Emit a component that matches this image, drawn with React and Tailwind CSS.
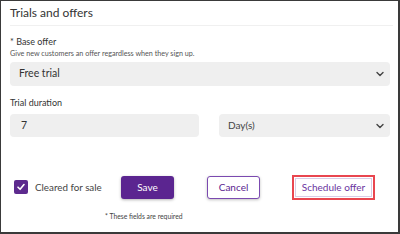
import React from "react";

function Chevron() {
  return (
    <svg width="8" height="6" viewBox="0 0 8 6" fill="none">
      <path d="M1 1.5 L4 4.5 L7 1.5" stroke="#444" strokeWidth="1.4" strokeLinecap="round" strokeLinejoin="round" />
    </svg>
  );
}

export default function App() {
  return (
    <div
      className="w-[400px] h-[234px] bg-white border-t border-l border-r-2 border-b-2 border-[#3a3a3a] overflow-hidden text-[#333]"
      style={{ fontFamily: "Lato, 'Open Sans', sans-serif" }}
    >
      <div className="pl-[9px] pr-[5px]">
        <div className="h-[25px] flex items-center text-[12px] text-[#333] border-b border-[#f0f0f0]">
          Trials and offers
        </div>
        <div className="pt-[10px] text-[9px] leading-[12px] text-[#333]">* Base offer</div>
        <div className="pt-[1px] text-[7.2px] leading-[10px] text-[#555]">
          Give new customers an offer regardless when they sign up.
        </div>
        <div className="mt-[3px] mr-[3px] h-[24px] rounded-[4px] bg-[#efefef] flex items-center justify-between pl-[9px] pr-[6px] text-[10.5px] text-[#333]">
          <span>Free trial</span>
          <Chevron />
        </div>
        <div className="pt-[11px] text-[9px] leading-[12px] text-[#333]">Trial duration</div>
        <div className="mt-[5px] mr-[3px] flex gap-[20px]">
          <div className="w-[189px] h-[23px] rounded-[4px] bg-[#efefef] flex items-center pl-[11px] text-[10.5px] text-[#333]">
            7
          </div>
          <div className="flex-1 h-[23px] rounded-[4px] bg-[#efefef] flex items-center justify-between pl-[9px] pr-[6px] text-[10px] text-[#444]">
            <span>Day(s)</span>
            <Chevron />
          </div>
        </div>
        <div className="mt-[37px] flex items-center h-[26px]">
          <div className="flex items-center pl-[4px] w-[111px]">
            <div className="w-[14px] h-[14px] rounded-[2px] bg-[#5d2a8e] flex items-center justify-center">
              <svg width="10" height="10" viewBox="0 0 10 10" fill="none">
                <path d="M2 5.2 L4.1 7.3 L8 2.6" stroke="white" strokeWidth="1.6" strokeLinecap="round" strokeLinejoin="round" />
              </svg>
            </div>
            <span className="ml-[7px] text-[9.8px] text-[#444]">Cleared for sale</span>
          </div>
          <div className="w-[53px] h-[23px] rounded-[3px] bg-[#5b2590] text-white text-[10px] flex items-center justify-center shadow-[0_1px_3px_rgba(0,0,0,0.3)]">
            Save
          </div>
          <div className="ml-[33px] w-[53px] h-[23px] rounded-[3px] border-[1.5px] border-[#7b4ab0] bg-white text-[#5b2590] text-[10px] flex items-center justify-center shadow-[0_1px_3px_rgba(0,0,0,0.25)]">
            Cancel
          </div>
          <div className="ml-[32px] w-[83px] h-[25px] border-2 border-[#e9464f] p-[1px] flex">
            <div className="flex-1 border border-[#d9cce6] bg-white text-[#6a35a0] text-[10px] flex items-center justify-center">
              Schedule offer
            </div>
          </div>
        </div>
        <div className="mt-[11px] pl-[95px] text-[6.8px] text-[#444]">* These fields are required</div>
      </div>
    </div>
  );
}
